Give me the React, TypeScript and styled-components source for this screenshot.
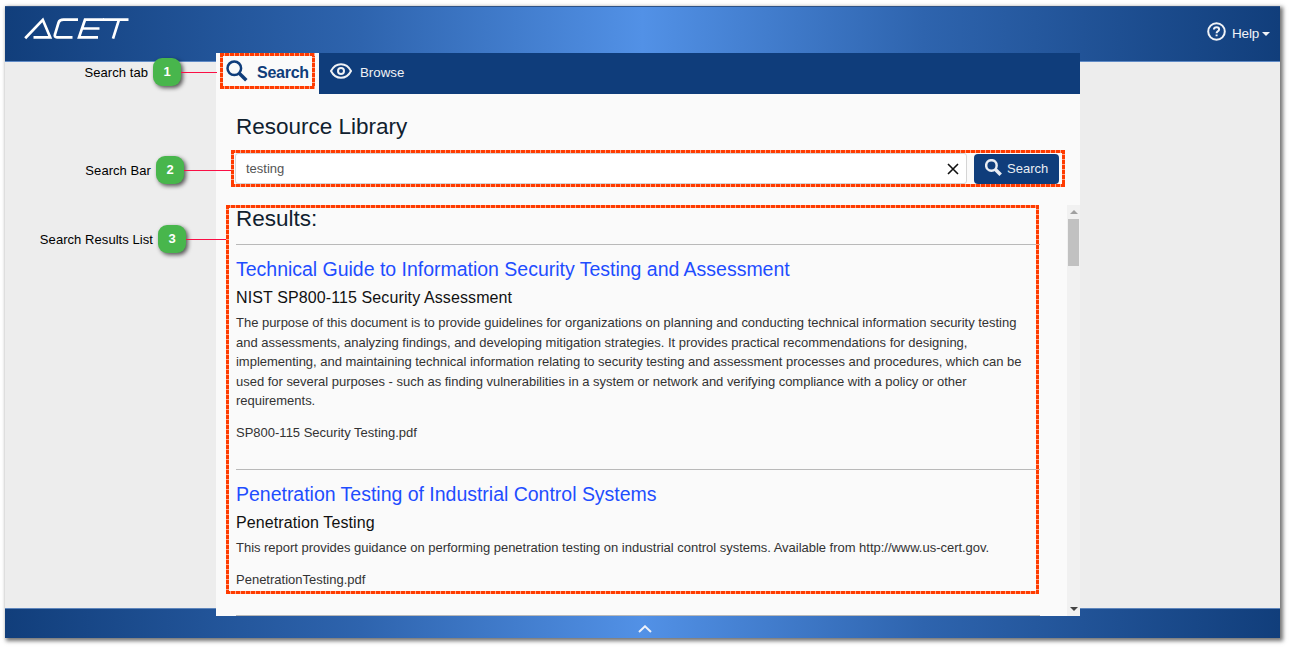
import React from "react";
import styled, { createGlobalStyle } from "styled-components";

const GlobalStyle = createGlobalStyle`
  * { box-sizing: border-box; }
  body { margin: 0; background: #fff; font-family: "Liberation Sans", Arial, sans-serif; overflow: hidden; }
  h1, h2, h3, h4, p { margin: 0; font-weight: 400; }
`;

const navy = "#0f3d7b";
const barGradient =
  "linear-gradient(to right, #113e7b 0%, #2e64ae 28%, #5291e6 50%, #2e64ae 72%, #113e7b 100%)";

const Page = styled.div`
  position: relative;
  width: 1289px;
  height: 647px;
  padding: 6px 9px 9px 5px;
`;

const Window = styled.div`
  width: 1275px;
  height: 632px;
  display: flex;
  flex-direction: column;
  background: #ededed;
  box-shadow: 2px 2px 4px 1px rgba(0, 0, 0, 0.55);
`;

const Header = styled.header`
  flex: 0 0 56px;
  display: flex;
  justify-content: space-between;
  align-items: flex-start;
  padding: 10px 9px 0 19px;
  background: ${barGradient};
  border-top: 1px solid #2d5287;
  border-bottom: 1px solid #5f8ac6;
`;

const HelpMenu = styled.div`
  display: flex;
  align-items: center;
  padding-top: 4px;
  color: #f1f3f7;
  font-size: 13.5px;
  svg { margin-right: 6px; }
`;

const HelpLabel = styled.span`
  padding-top: 5px;
  letter-spacing: -0.2px;
`;

const Caret = styled.i`
  flex: none;
  width: 0;
  height: 0;
  margin: 5px 1px 0 3px;
  border: 3.5px solid transparent;
  border-width: 4px 4px 0;
  border-top-color: #f1f3f7;
`;

const Panel = styled.main`
  position: relative;
  flex: none;
  width: 864px;
  height: 563px;
  margin: -9px 0 -8px 211px;
  display: flex;
  flex-direction: column;
  background: #fafafa;
  z-index: 1;
`;

const TabBar = styled.nav`
  flex: 0 0 41px;
  display: flex;
  background: ${navy};
`;

const Tab = styled.div<{ $active?: boolean }>`
  width: ${(p) => (p.$active ? 103 : 110)}px;
  display: flex;
  align-items: flex-start;
  gap: ${(p) => (p.$active ? 9 : 8)}px;
  padding: ${(p) => (p.$active ? "7px 0 0 10px" : "8px 0 0 11px")};
  background: ${(p) => (p.$active ? "#fafafa" : navy)};
  color: ${(p) => (p.$active ? navy : "#f0f2f5")};
  font-size: ${(p) => (p.$active ? 16 : 13.3)}px;
  font-weight: ${(p) => (p.$active ? 700 : 400)};
  letter-spacing: ${(p) => (p.$active ? -0.25 : 0)}px;
  svg { flex: none; }
`;

const TabLabel = styled.span<{ $top: number }>`
  padding-top: ${(p) => p.$top}px;
  line-height: 18px;
`;

const Title = styled.h1`
  padding: 19px 0 0 20px;
  font-size: 22.5px;
  line-height: 28px;
  color: #10212f;
`;

const SearchRow = styled.div`
  flex: none;
  display: flex;
  align-items: flex-end;
  gap: 7px;
  height: 31px;
  margin: 12px 20px 0 19px;
`;

const Field = styled.div`
  width: 732px;
  height: 31px;
  display: flex;
  align-items: center;
  justify-content: space-between;
  padding: 0 7px 0 10px;
  background: #fff;
  border: 1px solid #d5d5d5;
  border-radius: 3px;
  color: #555;
  font-size: 13px;
`;

const SearchButton = styled.div`
  width: 85px;
  height: 30px;
  display: flex;
  align-items: center;
  gap: 5px;
  padding: 0 0 1px 11px;
  border-radius: 4px;
  background: ${navy};
  color: #e9edf3;
  font-size: 13px;
  svg { margin-top: -2px; }
`;

const Results = styled.section`
  flex: 1;
  min-height: 0;
  margin-top: 21px;
  display: flex;
  justify-content: space-between;
`;

const ResultList = styled.div`
  width: 824px;
  padding-left: 20px;
  overflow: hidden;
`;

const ResultsHeading = styled.h2`
  height: 39px;
  font-size: 22.5px;
  line-height: 27px;
  color: #10212f;
`;

const ResultItem = styled.article<{ $height: number }>`
  height: ${(p) => p.$height}px;
  border-top: 1px solid #b9b9b9;
`;

const ResultLink = styled.h3`
  padding-top: 11px;
  font-size: 19.5px;
  line-height: 26px;
  letter-spacing: -0.015px;
  color: #1f4dff;
  white-space: nowrap;
`;

const ResultSubject = styled.h4`
  padding-top: 6px;
  font-size: 16px;
  line-height: 20px;
  letter-spacing: 0.11px;
  color: #111;
`;

const ResultText = styled.p`
  padding-top: 5px;
  font-size: 13px;
  line-height: 19.5px;
  letter-spacing: -0.022px;
  color: #333;
  white-space: pre;
`;

const FileName = styled.p`
  padding-top: 12px;
  font-size: 13px;
  line-height: 19px;
  color: #333;
`;

const Scrollbar = styled.div`
  width: 13px;
  display: flex;
  flex-direction: column;
  align-items: center;
  background: #f1f1f1;
`;

const Arrow = styled.i<{ $down?: boolean }>`
  margin: ${(p) => (p.$down ? "auto 0 5px" : "5px 0 5px")};
  border: 4px solid transparent;
  border-${(p) => (p.$down ? "top" : "bottom")}-color: ${(p) => (p.$down ? "#444" : "#a0a0a0")};
  border-${(p) => (p.$down ? "bottom" : "top")}-width: 0;
`;

const Thumb = styled.div`
  width: 11px;
  height: 47px;
  background: #c1c1c1;
`;

const Footer = styled.footer`
  flex: 0 0 30px;
  display: flex;
  justify-content: center;
  align-items: flex-end;
  padding: 0 0 5px 5px;
  background: ${barGradient};
  border-top: 1px solid #5f86bc;
`;

const Outline = styled.div<{ $x: number; $y: number; $w: number; $h: number }>`
  --dash: #ff3b00 0 4px, #ffa588 4px 5px;
  position: absolute;
  z-index: 2;
  left: ${(p) => p.$x}px;
  top: ${(p) => p.$y}px;
  width: ${(p) => p.$w}px;
  height: ${(p) => p.$h}px;
  background:
    repeating-linear-gradient(to right, var(--dash)) top / 100% 3px no-repeat,
    repeating-linear-gradient(to right, var(--dash)) bottom / 100% 3px no-repeat,
    repeating-linear-gradient(to bottom, var(--dash)) left / 3px 100% no-repeat,
    repeating-linear-gradient(to bottom, var(--dash)) right / 3px 100% no-repeat;
`;

const Callout = styled.div<{ $y: number; $end: number }>`
  position: absolute;
  z-index: 2;
  left: 0;
  top: ${(p) => p.$y}px;
  width: ${(p) => p.$end}px;
  height: 28px;
  display: flex;
  align-items: center;
`;

const CalloutLabel = styled.span<{ $w: number }>`
  flex: none;
  width: ${(p) => p.$w}px;
  padding-right: 5px;
  text-align: right;
  font-size: 13px;
  letter-spacing: 0.06px;
  color: #000;
  white-space: nowrap;
`;

const Badge = styled.b`
  flex: 0 0 28px;
  height: 28px;
  border-radius: 9px;
  background: #48b64c;
  box-shadow: 2px 2px 4px rgba(0, 0, 0, 0.65);
  color: #fff;
  font-size: 13px;
  line-height: 28px;
  text-align: center;
`;

const Leader = styled.span`
  flex: 1;
  height: 1px;
  background: #fa0f45;
`;

const Logo = () => (
  <svg width="106" height="23" viewBox="0 0 106 23" fill="none" stroke="#fff" strokeWidth="2.700">
    <path d="M1.200 21.300 18.800 2.800 26.200 20.300H9.500" />
    <path d="M54 2.700H39.500Q35.500 2.700 34.600 5.500L31 17.300Q30 20.300 33 20.300H48.500" />
    <path d="M80 2.700H61L55 20.300H74M58 11.500H75.500" />
    <path d="M79 2.700H104.500M95 2.700 89 21.600" />
  </svg>
);

const Magnifier = ({ size, color, weight }: { size: number; color: string; weight: number }) => (
  <svg width={size} height={size} viewBox="0 0 22 22" fill="none" stroke={color} strokeWidth={weight}>
    <circle cx="8.300" cy="8.300" r="6.800" />
    <path d="M13.200 13.200 20.300 20.300" strokeWidth={weight * 1.4} />
  </svg>
);

const Eye = () => (
  <svg width="22" height="20" viewBox="0 0 22 20" fill="none" stroke="#f0f2f5" strokeWidth="2">
    <path d="M1 10Q4.500 3.200 11 3.200T21 10Q17.500 16.800 11 16.800T1 10Z" />
    <circle cx="11" cy="10" r="3" />
  </svg>
);

const HelpIcon = () => (
  <svg width="19" height="19" viewBox="0 0 19 19" fill="none" stroke="#f1f3f7" strokeWidth="2">
    <circle cx="9.500" cy="9.500" r="8.300" />
    <path d="M6.900 7.500Q7.100 5.200 9.600 5.200T12.100 7.400Q12.100 8.600 10.700 9.400 9.600 10 9.600 11.300M9.600 12.500V14.300" />
  </svg>
);

const results = [
  {
    title: "Technical Guide to Information Security Testing and Assessment",
    subject: "NIST SP800-115 Security Assessment",
    text: [
      "The purpose of this document is to provide guidelines for organizations on planning and conducting technical information security testing",
      "and assessments, analyzing findings, and developing mitigation strategies. It provides practical recommendations for designing,",
      "implementing, and maintaining technical information relating to security testing and assessment processes and procedures, which can be",
      "used for several purposes - such as finding vulnerabilities in a system or network and verifying compliance with a policy or other",
      "requirements.",
    ],
    file: "SP800-115 Security Testing.pdf",
    height: 225,
  },
  {
    title: "Penetration Testing of Industrial Control Systems",
    subject: "Penetration Testing",
    text: [
      "This report provides guidance on performing penetration testing on industrial control systems. Available from http://www.us-cert.gov.",
    ],
    file: "PenetrationTesting.pdf",
    height: 146,
  },
];

const callouts = [
  { label: "Search tab", y: 58, labelWidth: 153, end: 217 },
  { label: "Search Bar", y: 156, labelWidth: 156, end: 231 },
  { label: "Search Results List", y: 225, labelWidth: 158, end: 226 },
];

export default function App() {
  return (
    <Page>
      <GlobalStyle />
      <Window>
        <Header>
          <Logo />
          <HelpMenu>
            <HelpIcon />
            <HelpLabel>Help</HelpLabel>
            <Caret />
          </HelpMenu>
        </Header>
        <Panel>
          <TabBar>
            <Tab $active>
              <Magnifier size={22} color={navy} weight={2.5} />
              <TabLabel $top={4}>Search</TabLabel>
            </Tab>
            <Tab>
              <Eye />
              <TabLabel $top={3}>Browse</TabLabel>
            </Tab>
          </TabBar>
          <Title>Resource Library</Title>
          <SearchRow>
            <Field>
              <span>testing</span>
              <svg width="12" height="12" viewBox="0 0 12 12" stroke="#111" strokeWidth="1.600">
                <path d="M1 1 11 11M11 1 1 11" />
              </svg>
            </Field>
            <SearchButton>
              <Magnifier size={17} color="#e9edf3" weight={3.2} />
              <span>Search</span>
            </SearchButton>
          </SearchRow>
          <Results>
            <ResultList>
              <ResultsHeading>Results:</ResultsHeading>
              {results.map((r) => (
                <ResultItem key={r.title} $height={r.height}>
                  <ResultLink>{r.title}</ResultLink>
                  <ResultSubject>{r.subject}</ResultSubject>
                  <ResultText>{r.text.join("\n")}</ResultText>
                  <FileName>{r.file}</FileName>
                </ResultItem>
              ))}
              <ResultItem $height={20} />
            </ResultList>
            <Scrollbar>
              <Arrow />
              <Thumb />
              <Arrow $down />
            </Scrollbar>
          </Results>
        </Panel>
        <Footer>
          <svg width="14" height="8" viewBox="0 0 14 8" fill="none" stroke="#eef2fa" strokeWidth="2">
            <path d="M1 7 7 1.300 13 7" />
          </svg>
        </Footer>
      </Window>
      <Outline $x={220} $y={53} $w={95} $h={36} />
      <Outline $x={231} $y={150} $w={834} $h={37} />
      <Outline $x={226} $y={205} $w={813} $h={389} />
      {callouts.map((c, i) => (
        <Callout key={c.label} $y={c.y} $end={c.end}>
          <CalloutLabel $w={c.labelWidth}>{c.label}</CalloutLabel>
          <Badge>{i + 1}</Badge>
          <Leader />
        </Callout>
      ))}
    </Page>
  );
}
